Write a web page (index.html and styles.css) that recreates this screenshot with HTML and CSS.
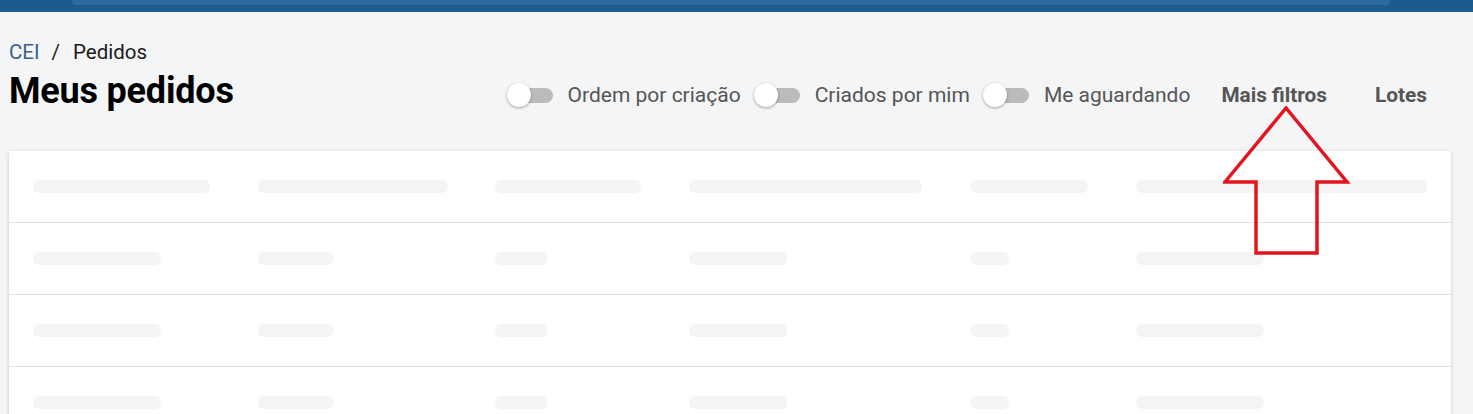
FILE: index.html
```html
<!DOCTYPE html>
<html lang="pt-BR">
<head>
<meta charset="utf-8">
<title>Meus pedidos</title>
<link rel="stylesheet" href="styles.css">
</head>
<body>
<header class="topbar"><div class="search"></div></header>
<main class="page">
  <nav class="crumbs"><a class="crumb-link">CEI</a><span class="sep">/</span><span class="crumb-current">Pedidos</span></nav>
  <div class="head">
    <h1 class="title">Meus pedidos</h1>
    <div class="filters">
      <label class="toggle"><span class="switch"><span class="track"></span><span class="thumb"></span></span><span class="tlabel">Ordem por criação</span></label>
      <label class="toggle"><span class="switch"><span class="track"></span><span class="thumb"></span></span><span class="tlabel">Criados por mim</span></label>
      <label class="toggle"><span class="switch"><span class="track"></span><span class="thumb"></span></span><span class="tlabel">Me aguardando</span></label>
      <button class="btn btn-more">Mais filtros</button>
      <button class="btn btn-lots">Lotes</button>
    </div>
  </div>
  <section class="card">
    <div class="row">
      <div class="cell"><span class="bone" style="width:177px"></span></div>
      <div class="cell"><span class="bone" style="width:190px"></span></div>
      <div class="cell"><span class="bone" style="width:146px"></span></div>
      <div class="cell"><span class="bone" style="width:233px"></span></div>
      <div class="cell"><span class="bone" style="width:117px"></span></div>
      <div class="cell"><span class="bone" style="width:291px"></span></div>
    </div>
    <div class="row">
      <div class="cell"><span class="bone" style="width:128px"></span></div>
      <div class="cell"><span class="bone" style="width:75px"></span></div>
      <div class="cell"><span class="bone" style="width:53px"></span></div>
      <div class="cell"><span class="bone" style="width:98px"></span></div>
      <div class="cell"><span class="bone" style="width:38px"></span></div>
      <div class="cell"><span class="bone" style="width:128px"></span></div>
    </div>
    <div class="row">
      <div class="cell"><span class="bone" style="width:128px"></span></div>
      <div class="cell"><span class="bone" style="width:75px"></span></div>
      <div class="cell"><span class="bone" style="width:53px"></span></div>
      <div class="cell"><span class="bone" style="width:98px"></span></div>
      <div class="cell"><span class="bone" style="width:38px"></span></div>
      <div class="cell"><span class="bone" style="width:128px"></span></div>
    </div>
    <div class="row">
      <div class="cell"><span class="bone" style="width:128px"></span></div>
      <div class="cell"><span class="bone" style="width:75px"></span></div>
      <div class="cell"><span class="bone" style="width:53px"></span></div>
      <div class="cell"><span class="bone" style="width:98px"></span></div>
      <div class="cell"><span class="bone" style="width:38px"></span></div>
      <div class="cell"><span class="bone" style="width:128px"></span></div>
    </div>
  </section>
</main>
<svg class="annot" width="130" height="152" viewBox="0 0 130 152" aria-hidden="true">
  <polygon points="63,2 2,76 33,76 33,147 94,147 94,76 124,76" fill="none" stroke="#e3141f" stroke-width="3.5" stroke-linejoin="miter"/>
</svg>
</body>
</html>
```

FILE: styles.css
```css
html, body {
  margin: 0;
  padding: 0;
}
body {
  background: #f3f5f7;
  font-family: Roboto, "Liberation Sans", Arial, sans-serif;
  color: #111;
  height: 414px;
  overflow: hidden;
  position: relative;
}
.topbar {
  height: 12px;
  background: #1c5b90;
  padding: 0 83px 0 72px;
}
.search {
  height: 5px;
  background: #2e6a9b;
  border-radius: 0 0 4px 4px;
}
.page {
  padding: 28px 22px 0 9px;
}
.crumbs {
  font-size: 20.5px;
  line-height: 25px;
  display: flex;
  align-items: center;
}
.crumb-link {
  color: #3b5f8a;
}
.sep {
  color: #222;
  margin: 0 13px 0 12px;
}
.crumb-current {
  color: #1b1b1b;
}
.head {
  display: flex;
  align-items: center;
  justify-content: space-between;
  margin-top: 5px;
  height: 42px;
}
.title {
  margin: 0;
  font-size: 36px;
  font-weight: 700;
  line-height: 42px;
  color: #000;
  letter-spacing: -0.2px;
}
.filters {
  display: flex;
  align-items: center;
  padding-top: 8px;
}
.toggle {
  display: flex;
  align-items: center;
  margin-right: 13px;
}
.switch {
  position: relative;
  width: 46px;
  height: 24px;
  margin-right: 15px;
  flex: none;
}
.track {
  position: absolute;
  left: 10px;
  right: 0;
  top: 5px;
  height: 15px;
  border-radius: 7.5px;
  background: #b9bbbd;
}
.thumb {
  position: absolute;
  left: 0;
  top: 0;
  width: 24px;
  height: 24px;
  border-radius: 50%;
  background: #fff;
  box-shadow: 0 1px 3px rgba(0,0,0,0.35);
}
.tlabel {
  font-size: 21px;
  color: #555;
  white-space: nowrap;
}
.btn {
  background: none;
  border: 0;
  font-family: inherit;
  font-size: 20.8px;
  font-weight: 700;
  color: #555;
  padding: 0;
  cursor: pointer;
}
.btn-more {
  margin-left: 18px;
}
.btn-lots {
  margin-left: 48px;
  margin-right: 24px;
}
.card {
  margin-top: 39px;
  background: #fff;
  box-shadow: 0 1px 4px rgba(0,0,0,0.18);
}
.row {
  display: grid;
  grid-template-columns: 225px 237px 194px 282px 165px 1fr;
  padding: 0 24px;
  height: 71px;
  align-items: center;
  border-bottom: 1px solid #e2e2e2;
}
.bone {
  display: block;
  height: 13px;
  border-radius: 6px;
  background: #f4f4f4;
}
.annot {
  position: absolute;
  left: 1223px;
  top: 106px;
}
```
